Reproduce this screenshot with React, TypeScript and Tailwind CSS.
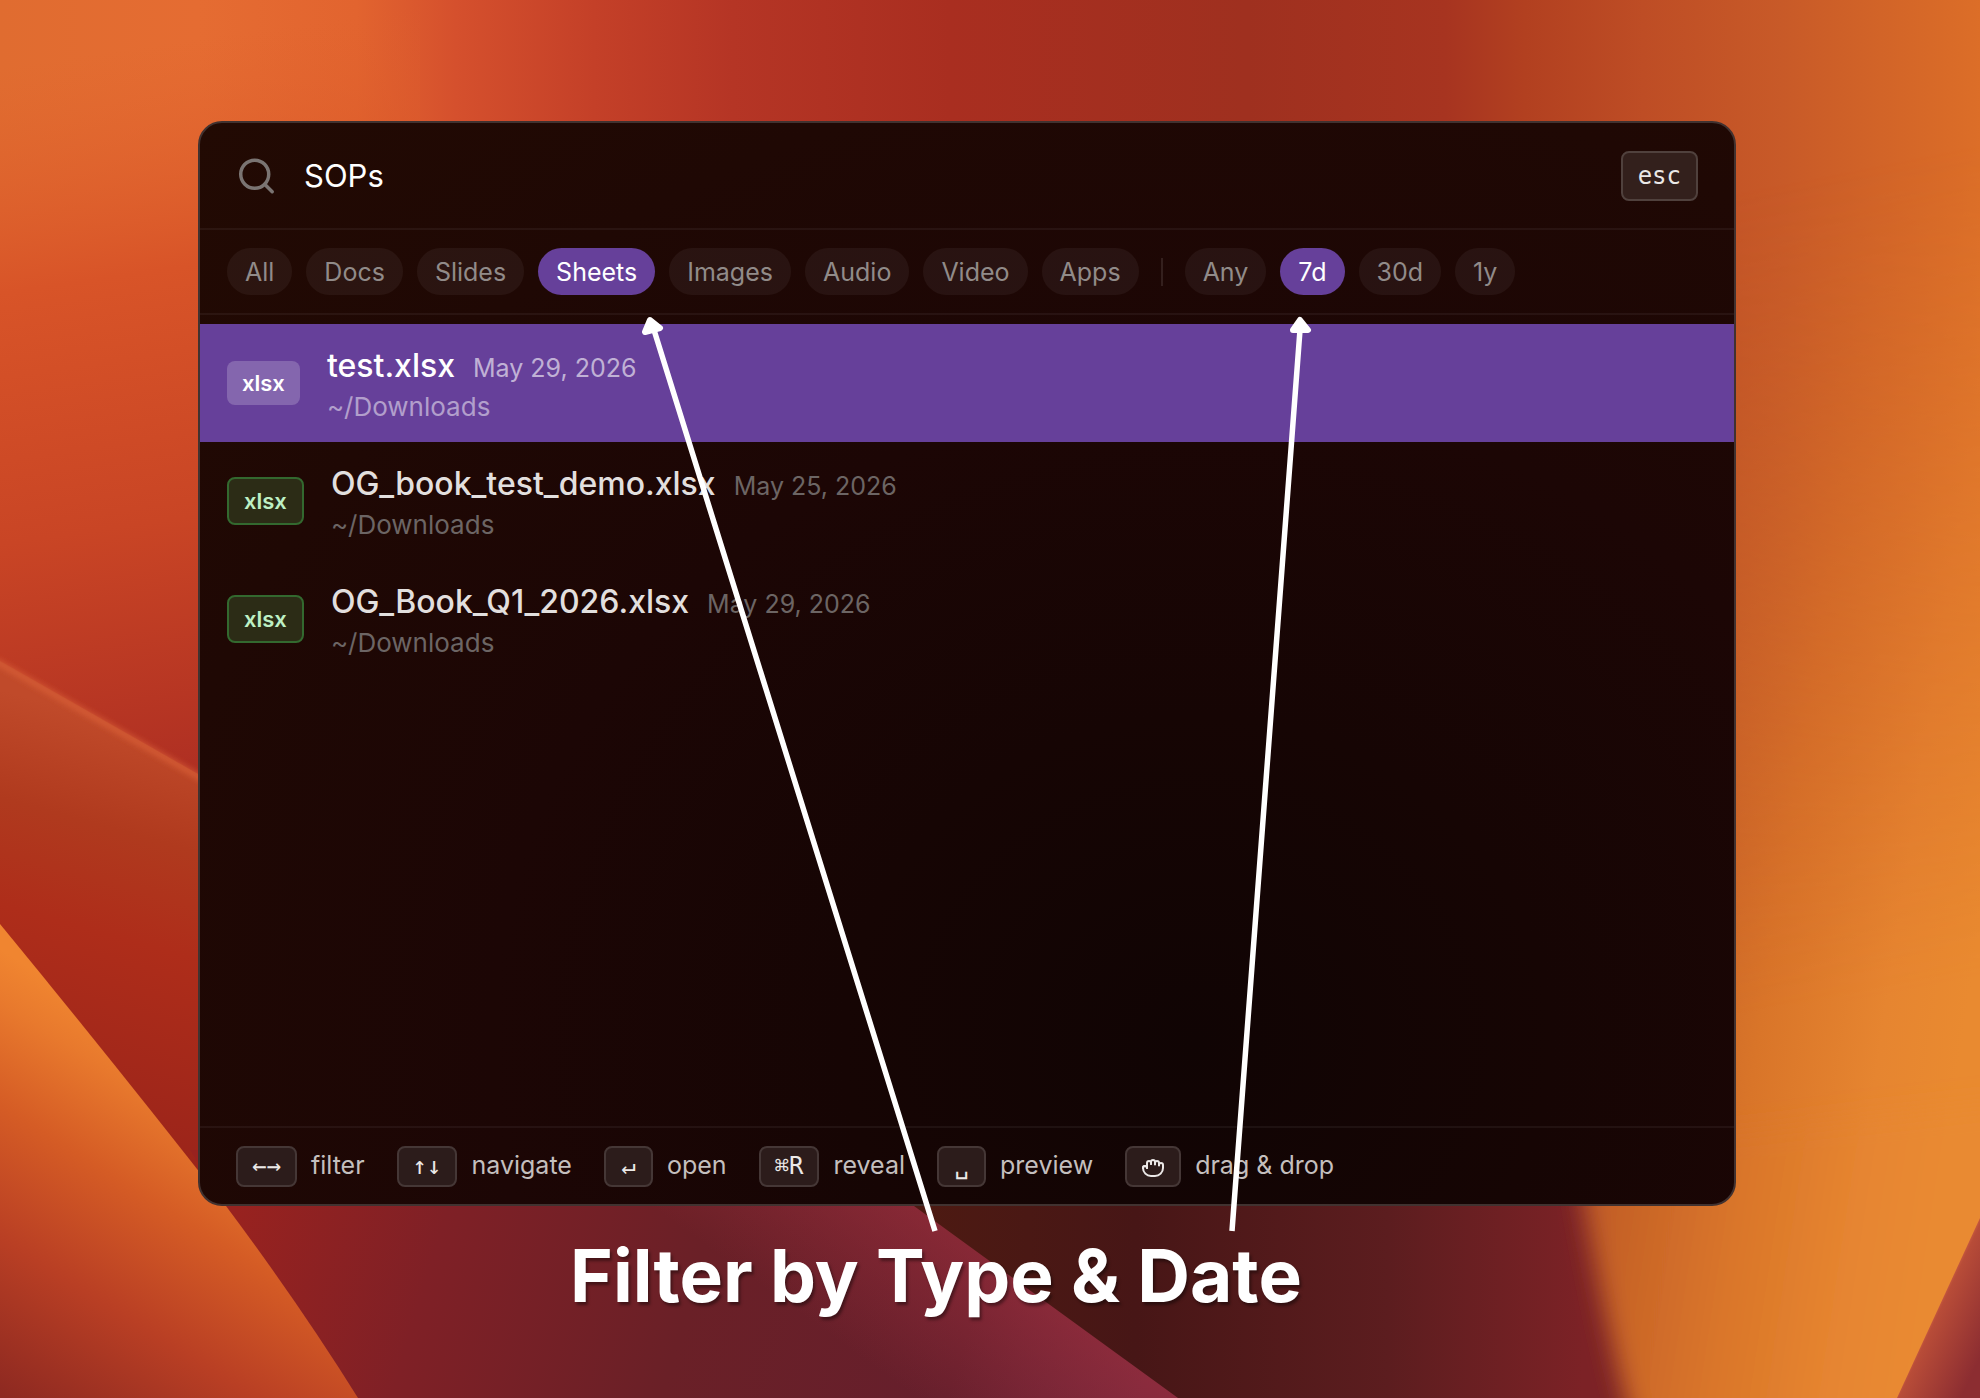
import React, { useState } from 'react';
import { Grab } from 'lucide-react';

type FileRow = { name: string; date: string; path: string };

const TYPES = ['All', 'Docs', 'Slides', 'Sheets', 'Images', 'Audio', 'Video', 'Apps'];
const DATES = ['Any', '7d', '30d', '1y'];

const FILES: FileRow[] = [
  { name: 'test.xlsx', date: 'May 29, 2026', path: '~/Downloads' },
  { name: 'OG_book_test_demo.xlsx', date: 'May 25, 2026', path: '~/Downloads' },
  { name: 'OG_Book_Q1_2026.xlsx', date: 'May 29, 2026', path: '~/Downloads' },
];

const HINTS: { keys: React.ReactNode; label: string }[] = [
  { keys: '←→', label: 'filter' },
  { keys: '↑↓', label: 'navigate' },
  { keys: '↵', label: 'open' },
  { keys: '⌘R', label: 'reveal' },
  { keys: '␣', label: 'preview' },
  { keys: <Grab className="size-6" strokeWidth={2} />, label: 'drag & drop' },
];

const Wallpaper: React.FC = () => (
  <svg
    className="absolute inset-0 size-full"
    viewBox="0 0 1980 1398"
    preserveAspectRatio="none"
    aria-hidden="true"
  >
    <defs>
      <linearGradient id="top" x1="0" y1="0" x2="1980" y2="0" gradientUnits="userSpaceOnUse">
        <stop offset="0" stopColor="#e06c30" />
        <stop offset="0.1" stopColor="#e56c32" />
        <stop offset="0.18" stopColor="#e2642f" />
        <stop offset="0.23" stopColor="#d5502d" />
        <stop offset="0.3" stopColor="#c44028" />
        <stop offset="0.37" stopColor="#b53525" />
        <stop offset="0.48" stopColor="#a92e20" />
        <stop offset="0.63" stopColor="#9f301f" />
        <stop offset="0.73" stopColor="#a73420" />
        <stop offset="0.77" stopColor="#b24020" />
        <stop offset="0.83" stopColor="#be4d25" />
        <stop offset="0.9" stopColor="#c85a28" />
        <stop offset="1" stopColor="#dc6e28" />
      </linearGradient>
      <linearGradient id="left" x1="0" y1="0" x2="120" y2="820" gradientUnits="userSpaceOnUse">
        <stop offset="0.08" stopColor="#e0622d" stopOpacity="0" />
        <stop offset="0.35" stopColor="#d85428" />
        <stop offset="0.65" stopColor="#c94525" />
        <stop offset="1" stopColor="#ab2c22" />
      </linearGradient>
      <linearGradient id="right" x1="1560" y1="1000" x2="1960" y2="1060" gradientUnits="userSpaceOnUse">
        <stop offset="0" stopColor="#b8502a" />
        <stop offset="0.2" stopColor="#c46028" />
        <stop offset="0.5" stopColor="#d97529" />
        <stop offset="0.8" stopColor="#e68530" />
        <stop offset="1" stopColor="#e98a30" />
      </linearGradient>
      <linearGradient id="rightMask" x1="1700" y1="200" x2="1860" y2="1000" gradientUnits="userSpaceOnUse">
        <stop offset="0" stopColor="#000" />
        <stop offset="1" stopColor="#fff" />
      </linearGradient>
      <mask id="rightBlend" maskUnits="userSpaceOnUse" x="0" y="0" width="1980" height="1398">
        <rect width="1980" height="1398" fill="url(#rightMask)" />
      </mask>
      <linearGradient id="fold" x1="110" y1="720" x2="0" y2="1120" gradientUnits="userSpaceOnUse">
        <stop offset="0" stopColor="#c04a2a" />
        <stop offset="0.25" stopColor="#b03a1e" />
        <stop offset="0.5" stopColor="#ae2d1a" />
        <stop offset="1" stopColor="#9b241a" />
      </linearGradient>
      <linearGradient id="petal" x1="210" y1="1080" x2="10" y2="1400" gradientUnits="userSpaceOnUse">
        <stop offset="0" stopColor="#f08530" />
        <stop offset="0.12" stopColor="#e8792d" />
        <stop offset="0.35" stopColor="#d55c25" />
        <stop offset="0.65" stopColor="#b93f24" />
        <stop offset="1" stopColor="#8e2921" />
      </linearGradient>
      <linearGradient id="wine" x1="240" y1="1200" x2="1120" y2="1460" gradientUnits="userSpaceOnUse">
        <stop offset="0" stopColor="#98221f" />
        <stop offset="0.22" stopColor="#7f2026" />
        <stop offset="0.5" stopColor="#6a2027" />
        <stop offset="0.8" stopColor="#661f2c" />
        <stop offset="1" stopColor="#70253a" />
      </linearGradient>
      <linearGradient id="wineEdge" x1="1010" y1="1275" x2="920" y2="1400" gradientUnits="userSpaceOnUse">
        <stop offset="0" stopColor="#a83240" stopOpacity="0.5" />
        <stop offset="1" stopColor="#a83240" stopOpacity="0" />
      </linearGradient>
      <linearGradient id="maroon" x1="920" y1="0" x2="1640" y2="0" gradientUnits="userSpaceOnUse">
        <stop offset="0" stopColor="#4d1a12" />
        <stop offset="0.3" stopColor="#471616" />
        <stop offset="0.65" stopColor="#5c1d1f" />
        <stop offset="0.92" stopColor="#7c2226" />
      </linearGradient>
      <linearGradient id="corner" x1="1930" y1="1308" x2="1990" y2="1336" gradientUnits="userSpaceOnUse">
        <stop offset="0" stopColor="#e8744a" />
        <stop offset="0.15" stopColor="#b84c38" />
        <stop offset="1" stopColor="#8c2d31" />
      </linearGradient>
      <filter id="soft" x="-10%" y="-10%" width="120%" height="120%">
        <feGaussianBlur stdDeviation="12" />
      </filter>
      <filter id="glow">
        <feGaussianBlur stdDeviation="3" />
      </filter>
    </defs>
    <rect width="1980" height="1398" fill="url(#top)" />
    <rect width="420" height="1000" fill="url(#left)" />
    <rect x="1500" width="480" height="1398" fill="url(#right)" mask="url(#rightBlend)" />
    <path d="M0 661 L198 774 L400 900 V1398 H0Z" fill="url(#fold)" />
    <path d="M-10 658 L208 782" fill="none" stroke="#e0653a" strokeWidth="4" filter="url(#glow)" />
    <path d="M190 1150 H1200 V1398 H340Z" fill="url(#wine)" />
    <path d="M190 1150 H1200 V1398 H340Z" fill="url(#wineEdge)" />
    <path d="M880 1180 L914 1206 L1178 1398 H1680 V1180Z" fill="url(#maroon)" />
    <path d="M1575 1150 Q1598 1300 1636 1440 H2020 V1100Z" fill="url(#right)" filter="url(#soft)" />
    <path d="M0 924 Q120 1070 226 1206 Q300 1305 358 1398 H0Z" fill="url(#petal)" />
    <path d="M1980 1218 L1897 1398 H1980Z" fill="url(#corner)" />
  </svg>
);

const Chip: React.FC<{ label: string; active: boolean; onClick: () => void }> = ({ label, active, onClick }) => (
  <button
    type="button"
    onClick={onClick}
    className={`h-[47px] rounded-full px-[18px] text-[25px] leading-8 ${
      active ? 'bg-[#66409a] text-white' : 'bg-white/5 text-[#918b89]'
    }`}
  >
    {label}
  </button>
);

const ResultRow: React.FC<{ file: FileRow; selected: boolean }> = ({ file, selected }) => (
  <li className={`flex h-[118px] items-center gap-[27px] px-[27px] ${selected ? 'bg-[#66409a]' : ''}`}>
    <span
      className={`rounded-lg px-[15px] py-1.5 text-[22px] leading-8 font-semibold ${
        selected ? 'bg-white/20 text-white' : 'border-2 border-[#33692f] bg-[#2c2c16] text-[#bdf0c4]'
      }`}
    >
      xlsx
    </span>
    <div className="pt-1.5">
      <div className="flex items-baseline gap-[18px]">
        <span className={`text-[32px] leading-10 font-medium ${selected ? 'text-white' : 'text-[#e2dfde]'}`}>
          {file.name}
        </span>
        <span className={`text-[25px] leading-10 ${selected ? 'text-white/60' : 'text-[#6c6564]'}`}>{file.date}</span>
      </div>
      <p className={`text-[26px] leading-[38px] ${selected ? 'text-white/50' : 'text-[#6c6564]'}`}>{file.path}</p>
    </div>
  </li>
);

const App: React.FC = () => {
  const [query, setQuery] = useState('SOPs');
  const [type, setType] = useState('Sheets');
  const [date, setDate] = useState('7d');

  return (
    <main className="relative flex min-h-screen flex-col overflow-hidden bg-[#a02f20] pt-[121px] pr-[244px] pl-[10%] font-['Inter',sans-serif]">
      <Wallpaper />

      <section className="relative flex flex-1 flex-col overflow-hidden rounded-3xl border-2 border-[#413230] bg-[#1b0605] bg-[radial-gradient(ellipse_at_65%_85%,#100404_0%,#160504_25%,#1c0605_50%,#220a03_100%)]">
        <div className="flex h-[107px] items-center gap-[26px] border-b-2 border-white/5 px-9">
          <svg
            viewBox="0 0 24 24"
            className="size-[42px] text-[#7a7472]"
            fill="none"
            stroke="currentColor"
            strokeWidth="2"
            strokeLinecap="round"
            aria-hidden="true"
          >
            <circle cx="10.7" cy="11" r="8" />
            <path d="m20.7 21-4.3-4.3" />
          </svg>
          <input
            aria-label="Search files"
            value={query}
            onChange={(e) => setQuery(e.target.value)}
            className="h-12 min-w-0 flex-1 bg-transparent text-[31px] text-white outline-none"
          />
          <kbd className="rounded-lg border-2 border-[#50413d] bg-[#33201c] px-[15px] py-[7px] font-['DejaVu_Sans_Mono',monospace] text-2xl leading-8 text-[#ebe8e7]">
            esc
          </kbd>
        </div>

        <div className="flex items-center gap-3.5 border-b-2 border-white/5 px-[27px] py-[18px]">
          {TYPES.map((t) => (
            <Chip key={t} label={t} active={t === type} onClick={() => setType(t)} />
          ))}
          <span className="mx-2 h-7 w-0.5 bg-white/10" />
          {DATES.map((d) => (
            <Chip key={d} label={d} active={d === date} onClick={() => setDate(d)} />
          ))}
        </div>

        <ul className="flex-1 pt-[9px]">
          {FILES.map((file, i) => (
            <ResultRow key={file.name} file={file} selected={i === 0} />
          ))}
        </ul>

        <footer className="flex h-[78px] items-center gap-8 border-t-2 border-white/5 px-9">
          {HINTS.map((hint) => (
            <span key={hint.label} className="flex items-center gap-3.5 text-[25px] text-[#c4bfbe]">
              <kbd className="flex h-[41px] min-w-[49px] items-center justify-center rounded-lg border-2 border-[#453736] bg-[#2c1c1b] px-3.5 font-['DejaVu_Sans_Mono',monospace] text-2xl text-[#ebe8e7]">
                {hint.keys}
              </kbd>
              {hint.label}
            </span>
          ))}
        </footer>
      </section>

      <h1 className="relative flex h-48 justify-center pt-7 pr-[62px] text-[73px] leading-[84px] font-bold text-white [text-shadow:2px_3px_3px_rgba(0,0,0,0.4)]">
        Filter by Type &amp; Date
      </h1>

      {/* callout arrows running from the caption up to the two active chips */}
      <svg
        className="pointer-events-none absolute inset-0 size-full"
        viewBox="0 0 1980 1398"
        preserveAspectRatio="none"
        fill="#fff"
        stroke="#fff"
        aria-hidden="true"
      >
        <path d="M935 1231 L654 330 M1232 1231 L1300 330" strokeWidth="5.5" />
        <path d="M650 320 L660 328 L645 332Z M1300 320 L1308 330 L1293 330Z" strokeWidth="6" strokeLinejoin="round" />
      </svg>
    </main>
  );
};

export default App;
